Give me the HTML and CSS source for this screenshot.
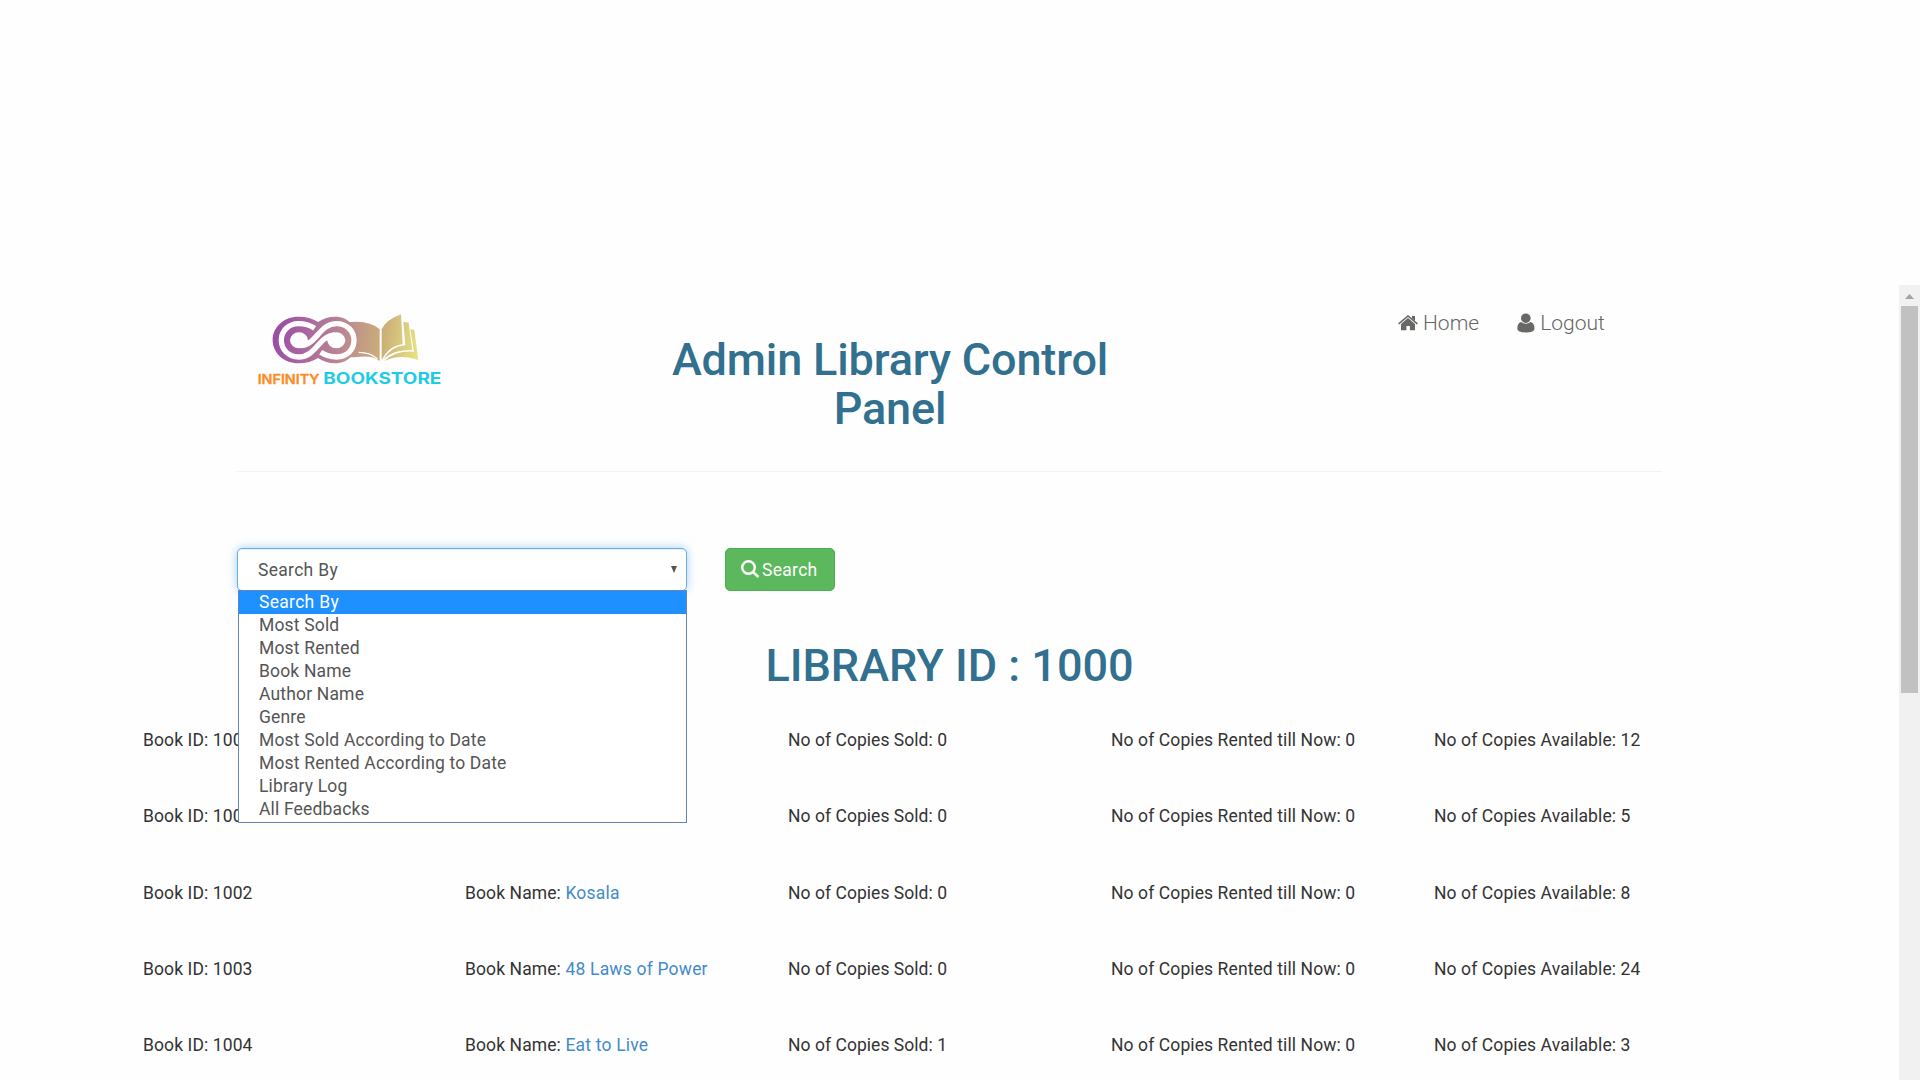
FILE: index.html
```
<!DOCTYPE html>
<html lang="en">
<head>
<meta charset="utf-8">
<title>Admin Library Control Panel</title>
<link rel="stylesheet" href="styles.css">
</head>
<body>
<main class="page">
  <header class="header">
    <svg class="logo" width="220" height="100" viewBox="0 0 660 300" role="img" aria-label="Infinity Bookstore">
      <defs>
        <linearGradient id="brand" gradientUnits="userSpaceOnUse" x1="98" y1="90" x2="540" y2="150">
          <stop offset="0" stop-color="#984ba8"/>
          <stop offset=".45" stop-color="#b98494"/>
          <stop offset=".75" stop-color="#ccb078"/>
          <stop offset="1" stop-color="#e8e684"/>
        </linearGradient>
      </defs>
      <g fill="url(#brand)">
        <path d="M335 66Q390 62 419 88V183Q395 164 345 172L320 172V66Z"/>
        <path d="M425 88Q440 58 483 43L488 133Q445 138 425 181Z"/>
        <path d="M490 65L506 68L517 150Q455 150 431 178Q453 139 496 136Z"/>
        <path d="M511 88L523 90L535 180Q480 160 433 183Q468 151 522 155Z"/>
        <path d="M176 50Q210 50 234 66Q258 50 286 50C325 50 353 82 353 120C353 158 325 190 286 190Q258 190 234 174Q210 190 176 190C130 190 98 158 98 120C98 82 130 50 176 50Z"/>
      </g>
      <path d="M356 157Q390 157 412 176" class="logo-cut" stroke-width="4"/>
      <g class="logo-cut" stroke-width="16">
        <path d="M224 85C209 75 194 71 176 71C145 71 124 93 124 121C124 149 146 171 176 171C228 171 236 108 284 105"/>
        <path d="M242 157C257 167 272 171 290 171C321 171 342 149 342 121C342 93 320 71 290 71C238 71 230 134 182 137"/>
      </g>
      <g class="logo-hole">
        <ellipse cx="177" cy="121" rx="27" ry="24"/>
        <ellipse cx="289" cy="121" rx="27" ry="24"/>
      </g>
      <text class="word-infinity" x="53" y="251" textLength="185" lengthAdjust="spacingAndGlyphs">INFINITY</text>
      <text class="word-bookstore" x="250" y="251" textLength="354" lengthAdjust="spacingAndGlyphs">BOOKSTORE</text>
    </svg>
    <h1 class="title">Admin Library Control Panel</h1>
    <nav class="nav">
      <a class="nav-link" href="#"><svg width="20" height="16" viewBox="0 0 20 16"><path d="M10 3.1L17 9v6.3h-5.1V11H8.400v4.300H3V9z"/><path d="M.6 8.800L10 1l9.400 7.800" class="roof"/><path d="M14 1h3v5l-3-2.500z"/></svg><span>Home</span></a>
      <a class="nav-link" href="#"><svg width="18" height="20" viewBox="0 0 18 20"><circle cx="8.800" cy="5.200" r="4.800"/><path d="M4 9Q8.800 12.600 13.600 9Q17.500 10 17.500 15.500Q17.500 19.500 9 19.500Q.3 19.500.3 15.500Q.3 10 4 9Z"/></svg><span>Logout</span></a>
    </nav>
  </header>

  <form class="search">
    <div class="select">
      <span class="value">Search By</span><span class="caret"></span>
      <ul class="options">
        <li class="selected">Search By</li>
        <li>Most Sold</li>
        <li>Most Rented</li>
        <li>Book Name</li>
        <li>Author Name</li>
        <li>Genre</li>
        <li>Most Sold According to Date</li>
        <li>Most Rented According to Date</li>
        <li>Library Log</li>
        <li>All Feedbacks</li>
      </ul>
    </div>
    <button class="button" type="button"><svg width="19" height="19" viewBox="0 0 19 19"><circle cx="7.500" cy="7.500" r="6.300"/><path d="M12 12l5.500 5"/></svg><span class="value">Search</span></button>
  </form>

  <h2 class="library">LIBRARY ID : 1000</h2>

  <section class="books">
    <div class="row"><span>Book ID: 1000</span><span></span><span class="sold">No of Copies Sold: 0</span><span>No of Copies Rented till Now: 0</span><span>No of Copies Available: 12</span></div>
    <div class="row"><span>Book ID: 1001</span><span></span><span class="sold">No of Copies Sold: 0</span><span>No of Copies Rented till Now: 0</span><span>No of Copies Available: 5</span></div>
    <div class="row"><span>Book ID: 1002</span><span>Book Name: <a href="#">Kosala</a></span><span class="sold">No of Copies Sold: 0</span><span>No of Copies Rented till Now: 0</span><span>No of Copies Available: 8</span></div>
    <div class="row"><span>Book ID: 1003</span><span>Book Name: <a href="#">48 Laws of Power</a></span><span class="sold">No of Copies Sold: 0</span><span>No of Copies Rented till Now: 0</span><span>No of Copies Available: 24</span></div>
    <div class="row"><span>Book ID: 1004</span><span>Book Name: <a href="#">Eat to Live</a></span><span class="sold">No of Copies Sold: 1</span><span>No of Copies Rented till Now: 0</span><span>No of Copies Available: 3</span></div>
  </section>
</main>
<aside class="scrollbar"><div class="arrow"></div><div class="thumb"></div></aside>
</body>
</html>
```
FILE: styles.css
```
* { box-sizing: border-box; }
body { margin: 0; height: 1080px; overflow: hidden; display: flex; background: #fefefe; color: #333; font: 17.5px/25px Roboto, sans-serif; }
a { color: #428bca; text-decoration: none; letter-spacing: .2px; }
.page { width: 1899px; padding-top: 285px; }
.header { display: flex; width: 1425px; height: 187px; margin-left: 237px; border-bottom: 1px solid #f3f3f3; }
.logo { flex: none; margin: 15px 0 0 3px; }
.logo-cut { fill: none; stroke: #fefefe; }
.logo-hole { fill: #fefefe; }
.word-infinity { fill: #ff8a1c; stroke: #ff8a1c; stroke-width: 1.5px; font: 500 40px Inter, sans-serif; }
.word-bookstore { fill: #1fcbe6; font: 700 46px Inter, sans-serif; }
.title, .library { margin: 0; color: #31708f; font-size: 45px; line-height: 49.5px; font-weight: 500; text-align: center; }
.title { width: 470px; margin: 50px 0 0 195px; line-height: 49px; letter-spacing: -.15px; }
.nav { display: flex; margin: 24px 0 0 273px; gap: 38px; height: 28px; }
.nav-link { display: flex; align-items: center; gap: 5px; color: #666; font-size: 21px; font-weight: 300; letter-spacing: 0; }
.nav-link svg { fill: #686865; }
.roof { fill: none; stroke: #686865; stroke-width: 1.6; }
.search { display: flex; margin: 76px 0 0 237px; gap: 38px; }
.select { position: relative; display: flex; align-items: center; justify-content: space-between; width: 450px; height: 43px; padding: 0 9px 0 20px; border: 1px solid #66afe9; border-radius: 5px; color: #555; background: #fff; box-shadow: inset 0 1px 1px rgba(0,0,0,.075), 0 0 10px rgba(102,175,233,.6); letter-spacing: .17px; }
.value { padding-top: 2px; letter-spacing: .3px; }
.caret { border: solid transparent; border-width: 7px 3.5px 0; border-top-color: #555; }
.options { position: absolute; top: 41px; left: 0; width: 449px; height: 233px; margin: 0; padding: 0; list-style: none; border: 1px solid #6286bd; background: #fff; }
.options li { height: 23px; line-height: 23px; padding-left: 20px; }
.options .selected { background: #1e90ff; color: #fff; letter-spacing: .3px; }
.button { display: flex; align-items: center; width: 110px; height: 43px; padding: 0 0 0 15px; gap: 2px; border: 1px solid #4cae4c; border-radius: 5px; background: #5cb85c; color: #fff; font: inherit; }
.button svg { fill: none; stroke: #fff; stroke-width: 2.4; margin-bottom: 1px; }
.library { margin: 50px 0 0 0; }
.books { margin: 12px 0 0 142px; letter-spacing: .1px; }
.row { display: grid; grid-template-columns: repeat(5, 323px); align-items: center; height: 76.3px; }
.row span:first-child { padding-left: 1px; }
.row .sold { letter-spacing: .04px; }
.scrollbar { width: 21px; margin-top: 285px; padding: 9px 2px 0; background: #f1f1f1; }
.arrow { width: 9px; height: 5px; margin: 0 auto 7px; background: #a3a3a3; clip-path: polygon(50% 0, 100% 100%, 0 100%); }
.thumb { height: 387px; background: #c1c1c1; }
```
